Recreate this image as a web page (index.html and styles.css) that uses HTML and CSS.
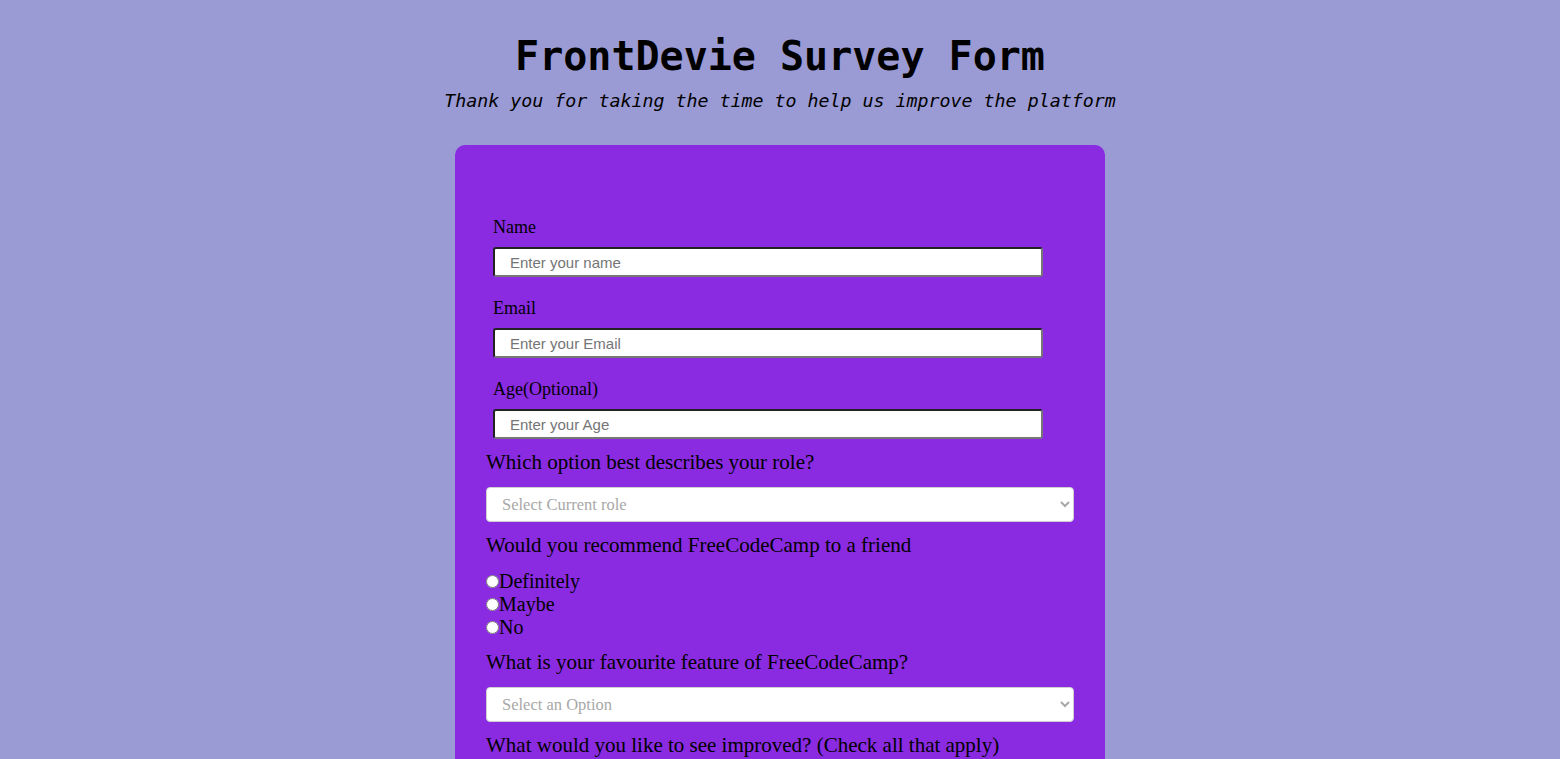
FILE: index.html
```html
<!DOCTYPE html>
<html lang="en">
<head>
<meta charset="utf-8">
<title>FrontDevie Survey Form</title>
<link rel="stylesheet" href="styles.css">
</head>
<body>
<header class="header">
  <h1 class="title" id="title">FrontDevie Survey Form</h1>
  <p class="subtitle" id="description">Thank you for taking the time to help us improve the platform</p>
</header>
<form class="survey" id="survey-form">
  <div class="field">
    <label class="field-label" for="name" id="name-label">Name</label>
    <input class="text-input" type="text" id="name" placeholder="Enter your name">
  </div>
  <div class="field">
    <label class="field-label" for="email" id="email-label">Email</label>
    <input class="text-input" type="email" id="email" placeholder="Enter your Email">
  </div>
  <div class="field">
    <label class="field-label" for="number" id="number-label">Age(Optional)</label>
    <input class="text-input" type="number" id="number" placeholder="Enter your Age">
  </div>

  <p class="question">Which option best describes your role?</p>
  <select class="dropdown" id="dropdown">
    <option value="" selected disabled>Select Current role</option>
    <option>Student</option>
    <option>Full Time Job</option>
    <option>Full Time Learner</option>
    <option>Prefer not to say</option>
    <option>Other</option>
  </select>

  <p class="question">Would you recommend FreeCodeCamp to a friend</p>
  <div class="radio-group">
    <label class="radio-row"><input class="radio" type="radio" name="recommend" value="definitely">Definitely</label>
    <label class="radio-row"><input class="radio" type="radio" name="recommend" value="maybe">Maybe</label>
    <label class="radio-row"><input class="radio" type="radio" name="recommend" value="no">No</label>
  </div>

  <p class="question">What is your favourite feature of FreeCodeCamp?</p>
  <select class="dropdown" id="feature">
    <option value="" selected disabled>Select an Option</option>
    <option>Challenges</option>
    <option>Projects</option>
    <option>Community</option>
    <option>Open Source</option>
  </select>

  <p class="question">What would you like to see improved? (Check all that apply)</p>
  <div class="check-group">
    <label class="radio-row"><input class="radio" type="checkbox" value="front-end">Front-end Projects</label>
    <label class="radio-row"><input class="radio" type="checkbox" value="back-end">Back-end Projects</label>
    <label class="radio-row"><input class="radio" type="checkbox" value="data">Data Visualization</label>
    <label class="radio-row"><input class="radio" type="checkbox" value="challenges">Challenges</label>
  </div>

  <p class="question">Any comments or suggestions?</p>
  <textarea class="comments" placeholder="Enter your comment here..."></textarea>
  <button class="submit" type="submit" id="submit">Submit</button>
</form>
</body>
</html>
```
FILE: styles.css
```css
html, body {
  margin: 0;
  padding: 0;
}

body {
  background: #9a9ad4;
  color: #000;
  font-family: "Liberation Serif", serif;
}

.header {
  text-align: center;
  padding-top: 31px;
}

.title {
  margin: 0;
  font-family: "DejaVu Sans Mono", "Liberation Mono", monospace;
  font-weight: bold;
  font-size: 40px;
  line-height: 50px;
}

.subtitle {
  margin: 8px 0 0;
  font-family: "DejaVu Sans Mono", "Liberation Mono", monospace;
  font-style: italic;
  font-size: 18.3px;
  line-height: 24px;
}

.survey {
  box-sizing: border-box;
  width: 650px;
  margin: 32px auto 40px;
  padding: 72px 31px 40px;
  background: #8a2be2;
  border-radius: 10px;
}

.field {
  padding-left: 7px;
  margin-bottom: 21px;
}

.field:nth-child(3) {
  margin-bottom: 0;
}

.field-label {
  display: block;
  font-size: 18px;
  line-height: 21px;
  margin-bottom: 9px;
}

.text-input {
  box-sizing: border-box;
  display: block;
  width: 550px;
  height: 30px;
  margin: 0;
  padding: 0 15px;
  border: 2px solid;
  border-color: #222 #777 #777 #222;
  border-radius: 3px;
  background: #fff;
  font-family: "Liberation Sans", Arial, sans-serif;
  font-size: 15px;
  appearance: textfield;
}

.text-input::placeholder {
  color: #757575;
}

.question {
  margin: 11px 0 13px;
  font-size: 21px;
  line-height: 24px;
}

.dropdown {
  box-sizing: border-box;
  display: block;
  width: 588px;
  height: 35px;
  margin: 0;
  padding: 0 10px 0 11px;
  border: 1px solid #cfcfcf;
  border-radius: 4px;
  background-color: #fff;
  color: #a8a8a8;
  font-family: "Liberation Serif", serif;
  font-size: 16.5px;
}

.radio-group {
  display: flex;
  flex-direction: column;
  margin-top: 2px;
  margin-bottom: 7px;
}

.check-group {
  display: flex;
  flex-direction: column;
  margin-bottom: 12px;
}

.radio-row {
  display: flex;
  align-items: center;
  font-size: 20px;
  line-height: 23px;
}

.radio {
  width: 13px;
  height: 13px;
  margin: 0;
}

.comments {
  box-sizing: border-box;
  display: block;
  width: 588px;
  height: 100px;
  border: 1px solid #cfcfcf;
  border-radius: 4px;
  padding: 10px;
  font-family: "Liberation Serif", serif;
  font-size: 16px;
}

.submit {
  display: block;
  width: 588px;
  height: 40px;
  margin-top: 20px;
  border: none;
  border-radius: 4px;
  background: #37af65;
  color: #fff;
  font-size: 18px;
  font-family: "Liberation Serif", serif;
}
```
